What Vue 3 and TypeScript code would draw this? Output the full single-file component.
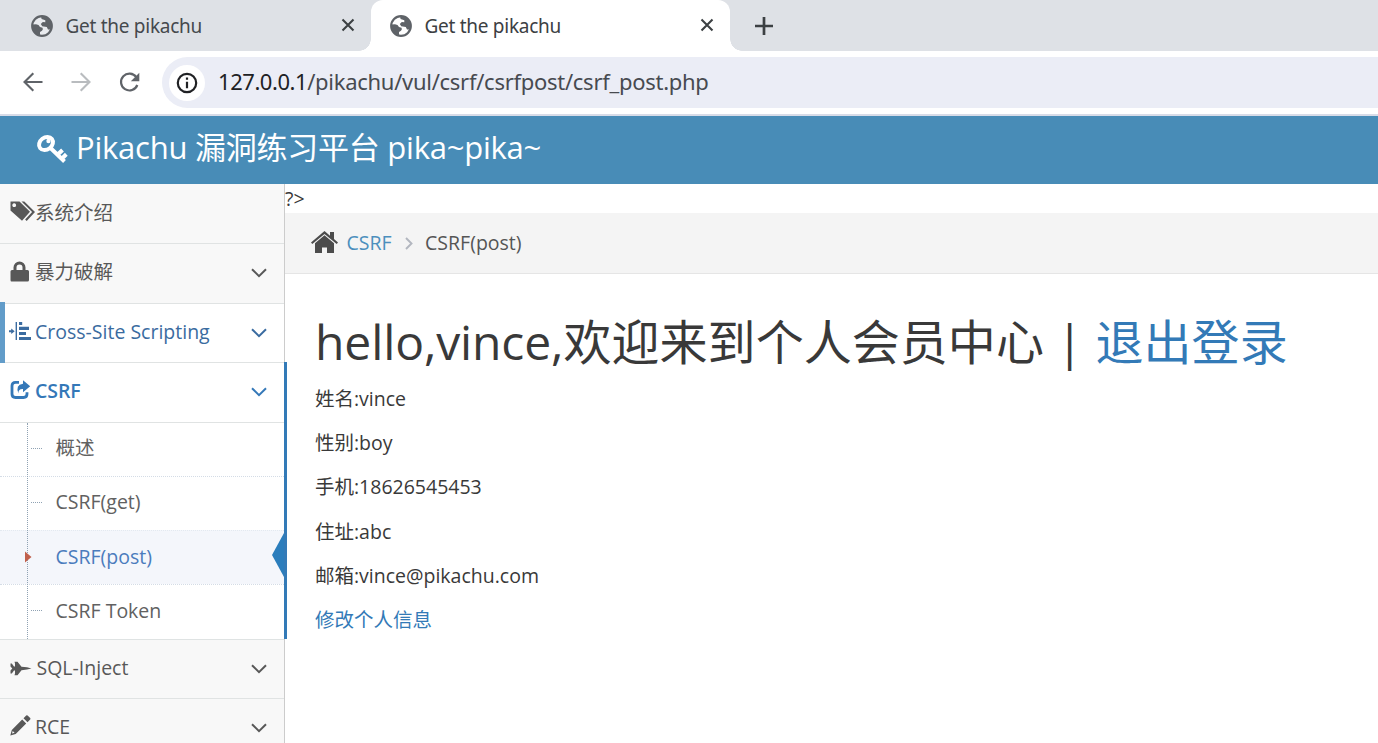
<script setup lang="ts">
interface MenuItem {
  label: string
  icon: string
  state?: string
  arrow: boolean
}

const tabs = [
  { title: 'Get the pikachu', active: false },
  { title: 'Get the pikachu', active: true },
]

const topMenu: MenuItem[] = [
  { label: '系统介绍', icon: 'tags', arrow: false },
  { label: '暴力破解', icon: 'lock', arrow: true },
  { label: 'Cross-Site Scripting', icon: 'indent', state: 'hover', arrow: true },
  { label: 'CSRF', icon: 'share', state: 'open', arrow: true },
]
const bottomMenu: MenuItem[] = [
  { label: 'SQL-Inject', icon: 'jet', arrow: true },
  { label: 'RCE', icon: 'pencil', arrow: true },
]
const submenu = [
  { label: '概述', active: false },
  { label: 'CSRF(get)', active: false },
  { label: 'CSRF(post)', active: true },
  { label: 'CSRF Token', active: false },
]
const info = ['姓名:vince', '性别:boy', '手机:18626545453', '住址:abc', '邮箱:vince@pikachu.com']

const icons: Record<string, string> = {
  tags: 'M0.500 .500h9l10.500 10.300-8 9L0.500 9.500zM4.200 2.300a1.900 1.900 0 1 0 .01 0zM11.500 .500h2.800l10.700 10.500-8.300 9-1.600-1.400 7-7.600z',
  lock: 'M3.500 9V6.500a6 6 0 0 1 12 0V9h2q1.500 0 1.500 1.500v8.500q0 1.500-1.500 1.500h-16Q.5 20.500 .5 19v-8.500Q.5 9 2 9zM6.500 9h6V6.500a3 3 0 0 0-6 0z',
  indent: 'M-1 9.300h2.200V7.500L4.700 10.300 1.200 13.100v-1.800H-1zM5.600 1h1.400v18H5.600zM9 1h3.200v3H9zM9 5.800h10v3.200H9zM9 10.900h7v3.200H9zM9 15.900h12v3.200H9z',
  jet: 'M.5 5.500h1.300l2.200 3H5V5.500l-.5-1.700h3L11.500 8.800q6 .3 10 1.700-4 1.400-10 1.700L7.500 17.200h-3l.5-1.700V12.500H4l-2.200 3H.5V12.500l1.800-2L.5 8.500z',
  pencil: 'M.300 20.500l1.500-5.500L12.200 4.500l4 4L5.700 19zM13.500 3.300L16.200.5q.7-.6 1.400 0L20.200 3q.6.700 0 1.400l-2.700 2.800zM2.700 16l-.7 2.500 2.600-.7z',
}
</script>

<template>
  <div class="window">
    <div class="tabstrip">
      <div v-for="(tab, i) in tabs" :key="i" class="tab" :class="{ active: tab.active }">
        <svg class="globe" width="22" height="22" viewBox="0 0 22 22">
          <circle cx="11" cy="11" r="9.800" fill="#fff" fill-opacity=".35" stroke="#5f6368" stroke-width="2.200" />
          <path d="M1.500 9.500l3.500-.3q3 .2 4 2.800l2.500.8q1 1.500-.5 3L9 17v3.800Q1 19 1.500 9.500zM10 1.500q7-1 10.300 5.500v7.500h-3.300l-1.200-2.500-4.600-.7-1.400-2.300 2-2 2.500.2V5.200L10.600 4z" fill="#5f6368" />
        </svg>
        <span class="tab-title">{{ tab.title }}</span>
        <svg class="close" width="14" height="14" viewBox="0 0 14 14"><path d="M1.500 1.500l11 11m0-11l-11 11" stroke="#3c4043" stroke-width="2.100" /></svg>
      </div>
      <svg class="plus" width="18" height="18" viewBox="0 0 18 18"><path d="M9 0v18M0 9h18" stroke="#3c4043" stroke-width="2.700" /></svg>
    </div>

    <div class="toolbar">
      <svg class="nav" width="20" height="20" viewBox="0 0 20 20"><path d="M19.500 10H1.800M10.300 1.200L1.500 10l8.800 8.800" fill="none" stroke="#5f6368" stroke-width="2.100" /></svg>
      <svg class="nav" width="20" height="20" viewBox="0 0 20 20"><path d="M.5 10h17.700M9.700 1.200l8.800 8.800-8.800 8.800" fill="none" stroke="#b9bcbf" stroke-width="2.100" /></svg>
      <svg class="nav reload" width="21" height="21" viewBox="0 0 21 21"><path d="M17.300 5.200A8.400 8.400 0 1 0 18.300 13" fill="none" stroke="#5f6368" stroke-width="2.200" /><path d="M20.300.8v8.500h-8.500z" fill="#5f6368" /></svg>
      <div class="omnibox">
        <div class="site-info">
          <svg width="22" height="22" viewBox="0 0 22 22"><circle cx="11" cy="11" r="9.200" fill="none" stroke="#202124" stroke-width="2.200" /><path d="M11 9.700v6.500M11 5.500v2.300" stroke="#202124" stroke-width="2.200" /></svg>
        </div>
        <span class="url"><b>127.0.0.1</b>/pikachu/vul/csrf/csrfpost/csrf_post.php</span>
      </div>
    </div>

    <header class="navbar">
      <svg width="32" height="30" viewBox="0 0 32 30">
        <g fill="none" stroke="#fff">
          <ellipse cx="10" cy="9.500" rx="7.500" ry="6" stroke-width="4" transform="rotate(-38 10 9.500)" />
          <path d="M14 13.500L28.500 27.500M21.500 20.800l5-4.800M26 24.500l4.300-4.200" stroke-width="4" />
        </g>
        <circle cx="12.500" cy="7" r="2.200" fill="#fff" />
      </svg>
      <span class="brand">Pikachu 漏洞练习平台 pika~pika~</span>
    </header>

    <div class="body">
      <nav class="sidebar">
        <div v-for="item in topMenu" :key="item.label" class="item" :class="[item.icon, item.state]">
          <svg v-if="item.icon === 'share'" class="icon" width="25" height="21" viewBox="0 0 25 21">
            <path d="M9 3.300H5.500Q2 3.300 2 6.800v8.200Q2 18.500 5.500 18.500h8q3.500 0 3.500-3.500v-1.800" fill="none" stroke="currentColor" stroke-width="2.800" />
            <path d="M13 1.300L20.200 7.300 13 13.300V10Q8 9.700 8.500 14.500 5 6 13 4.800z" fill="currentColor" />
          </svg>
          <svg v-else class="icon" width="25" height="21" viewBox="0 0 25 21"><path :d="icons[item.icon]" fill="currentColor" fill-rule="evenodd" /></svg>
          <span class="label">{{ item.label }}</span>
          <svg v-if="item.arrow" class="arrow" width="16" height="10" viewBox="0 0 16 10"><path d="M1 1.200l7 7 7-7" fill="none" stroke="currentColor" stroke-width="2" /></svg>
        </div>
        <div class="submenu">
          <div v-for="sub in submenu" :key="sub.label" class="sub" :class="{ active: sub.active }">
            <svg v-if="sub.active" class="caret" width="7" height="12" viewBox="0 0 7 12"><path d="M0 .5l6.500 5.500L0 11.500z" fill="#c0604c" /></svg>
            <i v-else class="tick"></i>
            <span>{{ sub.label }}</span>
            <svg v-if="sub.active" class="pointer" width="12" height="44" viewBox="0 0 12 44"><path d="M12 0v44L0 22z" fill="#2b7dbc" /></svg>
          </div>
        </div>
        <div v-for="item in bottomMenu" :key="item.label" class="item" :class="item.icon">
          <svg class="icon" width="25" height="21" viewBox="0 0 25 21"><path :d="icons[item.icon]" fill="currentColor" fill-rule="evenodd" /></svg>
          <span class="label">{{ item.label }}</span>
          <svg class="arrow" width="16" height="10" viewBox="0 0 16 10"><path d="M1 1.200l7 7 7-7" fill="none" stroke="currentColor" stroke-width="2" /></svg>
        </div>
      </nav>

      <main class="main">
        <div class="stray">?&gt;</div>
        <div class="crumbs">
          <svg class="home" width="27" height="22" viewBox="0 0 27 22"><path d="M13.500 0L19 4.700V1h4v7l4 3.500-1.300 1.600L13.500 3 1.300 13.100 0 11.500zM13.500 4.300L23 12.300V22h-7v-5.500h-5V22H4v-9.700z" fill="#4c4c4c" /></svg>
          <a class="crumb-link">CSRF</a>
          <svg class="sep" width="8" height="13" viewBox="0 0 8 13"><path d="M1 1l5.500 5.500L1 12" fill="none" stroke="#b2b6bf" stroke-width="1.900" /></svg>
          <span class="crumb-current">CSRF(post)</span>
        </div>
        <div class="content">
          <h1><span class="hello">hello,vince,</span>欢迎来到个人会员中心 | <a>退出登录</a></h1>
          <p v-for="line in info" :key="line">{{ line }}</p>
          <p><a>修改个人信息</a></p>
        </div>
      </main>
    </div>
  </div>
</template>

<style>
body { margin: 0; overflow: hidden; }
</style>

<style scoped>
* { box-sizing: border-box; }
.window {
  width: 1378px; height: 743px; overflow: hidden; background: #fff;
  font-family: "Open Sans", "Noto Sans CJK SC", sans-serif;
  font-size: 19.5px; color: #393939;
}
svg { display: block; flex: none; overflow: visible; }

.tabstrip { display: flex; height: 51px; background: #dee1e6; padding-left: 12px; }
.tab { position: relative; display: flex; align-items: center; width: 359px; height: 51px; padding: 0 16px 0 19px; font-family: "Noto Sans", sans-serif; font-size: 19px; color: #45494d; }
.tab.active { background: #fff; border-radius: 12px 12px 0 0; color: #3c4043; }
.tab.active::before, .tab.active::after { content: ""; position: absolute; bottom: 0; width: 12px; height: 12px; }
.tab.active::before { left: -12px; background: radial-gradient(circle at 0 0, transparent 11.500px, #fff 12px); }
.tab.active::after { right: -12px; background: radial-gradient(circle at 100% 0, transparent 11.500px, #fff 12px); }
.tab-title { margin-left: 12.5px; flex: 1; white-space: nowrap; letter-spacing: -.28px; }
.close { margin-bottom: 1px; }
.plus { margin: 17px 0 0 24.5px; }

.toolbar { display: flex; align-items: center; height: 65px; border-bottom: 2px solid #d8dce8; padding: 0 0 1px 23px; }
.nav { margin-right: 28px; }
.nav.reload { margin-right: 22px; }
.omnibox { display: flex; align-items: center; flex: 1; height: 51px; margin-top: 1px; padding-left: 7px; background: #ebedf6; border-radius: 26px 0 0 26px; }
.site-info { display: flex; align-items: center; justify-content: center; width: 36px; height: 36px; border-radius: 50%; background: #fff; }
.url { margin: -3px 0 0 13px; font-family: "Noto Sans", sans-serif; font-size: 22px; color: #474a50; letter-spacing: -.28px; white-space: nowrap; }
.url b { font-weight: 400; color: #202124; letter-spacing: -.45px; }

.navbar { display: flex; align-items: flex-start; height: 68px; background: #488cb7; padding: 18px 0 0 36px; color: #fff; }
.brand { margin: -9px 0 0 8px; font-size: 31px; line-height: 44px; letter-spacing: -.24px; white-space: nowrap; }

.body { display: flex; height: 559px; }
.sidebar { width: 285px; border-right: 1px solid #ccc; background: #f8f8f8; color: #585858; }
.item { position: relative; display: flex; align-items: center; width: 284px; height: 60px; padding: 0 17.5px 3px 10px; border-bottom: 1px solid #e0e3e3; }
.item .label { flex: 1; line-height: 28px; white-space: nowrap; }
.item .arrow { margin-top: 2px; }
.item .icon { margin-top: -2px; }
.item.tags { padding-bottom: 2px; }
.item.indent { height: 59px; padding-bottom: 2px; background: #fff; color: #3a6ba0; }
.item.indent::before { content: ""; position: absolute; left: 0; top: -2px; width: 5px; height: 62px; background: #629cc9; }
.item.share { padding-bottom: 4px; background: #fff; color: #3478b8; }
.item.share .label { font-weight: 600; letter-spacing: -.1px; }
.item.open::after { content: ""; position: absolute; left: 284px; top: -1px; width: 3px; height: 277px; background: #337ab7; }
.item.jet { height: 59px; padding-bottom: 2px; }
.item.jet .label { padding-left: 1.5px; }
.item.jet .icon { margin-top: 1px; }
.item.pencil { padding-bottom: 4px; }

.submenu { position: relative; width: 284px; background: #fff; border-bottom: 1px solid #dfe3e3; }
.submenu::before { content: ""; position: absolute; left: 27px; top: 0; bottom: 0; border-left: 1px dotted #8fa2b3; z-index: 1; }
.sub { position: relative; display: flex; align-items: center; height: 54px; padding: 0 0 3px 30.5px; border-top: 1px dotted #d4dce6; color: #616161; }
.sub:first-child { height: 53px; border-top: 0; }
.sub:last-child { height: 55px; }
.sub span { line-height: 28px; }
.tick { width: 11px; height: 1px; margin-right: 14px; border-top: 1px dotted #8fa2b3; }
.sub.active { background: #f4f6fb; color: #4b7cbd; padding: 0 0 2px 25px; border-top-color: #e3e9f0; }
.caret { position: relative; z-index: 2; margin-right: 23.5px; }
.pointer { position: absolute; right: 0; top: 2px; }

.main { flex: 1; }
.stray { height: 29px; line-height: 30px; }
.crumbs { display: flex; align-items: center; height: 61px; padding: 0 0 1px 26px; background: #f4f4f4; border-bottom: 1px solid #e5e5e5; color: #555; }
.home { margin-top: -1px; }
.crumb-link { margin-left: 8.5px; color: #4c8fbd; }
.sep { margin: 2px 12.5px 0 13px; }
.content { padding: 38px 0 0 30px; }
h1 { margin: 0 0 12px; font-size: 48px; font-weight: 400; line-height: 60px; letter-spacing: .06px; white-space: nowrap; }
.hello { letter-spacing: -.12px; }
a { color: #337ab7; }
p { margin: 0 0 15.2px; height: 29px; line-height: 29px; }
</style>
